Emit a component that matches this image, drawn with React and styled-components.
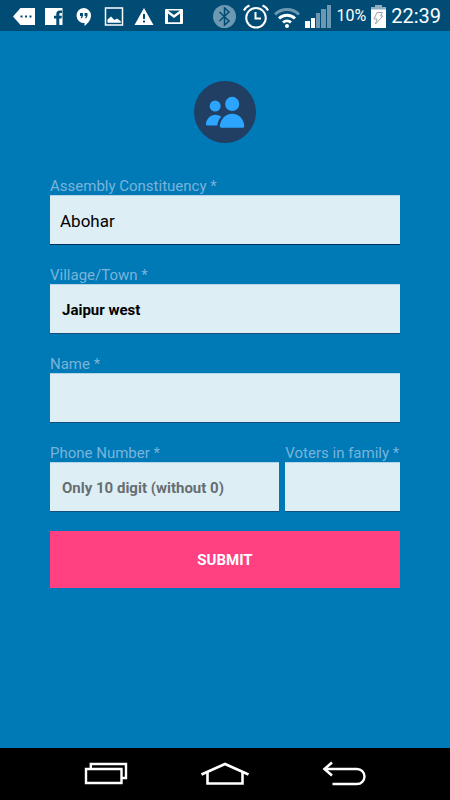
import React, {useState} from 'react';
import styled, {createGlobalStyle} from "styled-components";

const GlobalStyle = createGlobalStyle`
* {
    box-sizing: border-box;
}
body {
    margin: 0;
    background: #0079b7;
    font-family: Roboto, "Liberation Sans", sans-serif;
}
`
const Screen = styled.div`
display: flex;
flex-direction: column;
min-height: 100vh;
`
const StatusBar = styled.header`
display: flex;
justify-content: space-between;
align-items: center;
height: 31px;
padding: 0 9px 0 13px;
background: #004c75;
color: #fff;
`
const StatusGroup = styled.div`
display: flex;
align-items: center;
gap: ${props => props.$gap};
`
const StatusIcon = styled.svg`
display: block;
flex: none;
`
const Percent = styled.span`
font-size: 16px;
line-height: 32px;
`
const Clock = styled.time`
font-size: 20px;
line-height: 32px;
`
const Main = styled.main`
display: flex;
flex: 1;
flex-direction: column;
align-items: center;
padding: 50px 50px 0;
`
const Logo = styled.svg`
display: block;
margin-bottom: 34px;
`
const Form = styled.form`
display: flex;
flex-direction: column;
gap: 19px;
width: 100%;
`
const Fields = styled.div`
display: flex;
flex-direction: column;
gap: 21px;
`
const Row = styled.div`
display: flex;
gap: 6px;
`
const Field = styled.div`
display: flex;
flex-direction: column;
flex: ${props => props.$flex || 'none'};
min-width: 0;
`
const Label = styled.label`
color: #78b4da;
font-size: 15px;
line-height: 18px;
white-space: nowrap;
`
const Input = styled.input`
width: 100%;
height: 50px;
padding: 2px 12px 0;
border: 0;
border-top: 1px solid #b4d5e9;
border-bottom: 1px solid #13507f;
border-radius: 0;
outline: none;
background: #deeef5;
color: #000;
font-family: inherit;
font-size: 15px;
font-weight: 700;

&::placeholder {
    color: #666e72;
    opacity: 1;
}
`
const Select = styled(Input)`
appearance: none;
padding: 2px 10px 0;
border-bottom-color: #04305e;
font-size: 17px;
font-weight: 400;
`
const Submit = styled.button`
height: 57px;
border: 0;
background: #ff4081;
color: #fff;
font-family: inherit;
font-size: 15px;
font-weight: 700;
`
const NavBar = styled.nav`
display: flex;
justify-content: space-between;
align-items: center;
height: 52px;
padding: 0 82px;
background: #000;
`
const NavButton = styled.button`
display: flex;
padding: 0;
border: 0;
background: none;
color: #fff;
`

function Notifications() {
    return (
        <StatusGroup $gap="8px">
            <StatusIcon width="22" height="24" viewBox="0 0 22 24" fill="#fff">
                <path d="M0 12.500 7.500 4H22v17H7.500z"/>
                <path d="M7.500 11.500h2v2h-2zM12 11.500h2v2h-2zM16.500 11.500h2v2h-2z" fill="#004c75"/>
            </StatusIcon>
            <StatusIcon width="22" height="24" viewBox="0 0 22 24" fill="#fff">
                <path d="M2 4h17.500v17h-3.200v-6.500h2.200l.4-2.700h-2.600V10.300q0-1.300 1.400-1.300h1.300V6.500h-2.200q-3.500 0-3.500 3.500v1.800H11v2.700h2.300V21H2z"/>
            </StatusIcon>
            <StatusIcon width="22" height="24" viewBox="0 0 22 24" fill="#fff">
                <path d="M10.500 4a7.500 7.500 0 0 1 7.500 7.500c0 5-4 8.500-6.500 10.500v-3A7.500 7.500 0 1 1 10.500 4z"/>
                <path d="M7 9h3v3l-1.200 2.300H7.600l.8-2.300H7zM11.500 9h3v3l-1.200 2.300h-1.200l.8-2.300h-1.400z" fill="#004c75"/>
            </StatusIcon>
            <StatusIcon width="22" height="24" viewBox="0 0 22 24" fill="#fff">
                <path d="M2.500 4h17v17h-17z" fill="none" stroke="#fff" strokeWidth="1.500"/>
                <path d="M4.500 18.800v-3.300l3.500-3 3.500 3.500 2.500-1.500 3.800 2.800v1.500z"/>
            </StatusIcon>
            <StatusIcon width="22" height="24" viewBox="0 0 22 24" fill="#fff">
                <path d="M11 4 20.500 21h-19z"/>
                <path d="M10 10h2v5h-2zM10 16.500h2v2h-2z" fill="#004c75"/>
            </StatusIcon>
            <StatusIcon width="22" height="24" viewBox="0 0 22 24" fill="#fff">
                <path d="M3 5h16q1 0 1 1v13q0 1-1 1H3q-1 0-1-1V6q0-1 1-1z"/>
                <path d="M5 18.300V9.500l6 4.500 6-4.500v8.800z" fill="#004c75"/>
                <path d="M5 6.500h12L11 11z" fill="#004c75"/>
            </StatusIcon>
        </StatusGroup>
    )
}

function SystemStatus() {
    return (
        <StatusGroup $gap="5px">
            <StatusIcon width="26" height="26" viewBox="0 0 26 26">
                <circle cx="12.500" cy="13.500" r="11.500" fill="#6d98b1"/>
                <path d="M7.500 9 17 18l-4.500 4V5l4.500 4-9.500 9" fill="none" stroke="#004c75" strokeWidth="1.500"/>
            </StatusIcon>
            <StatusIcon width="26" height="26" viewBox="0 0 26 26" fill="none" stroke="#fff" strokeWidth="2">
                <circle cx="13" cy="14.800" r="9.800"/>
                <path d="M12.500 9v6.500H18"/>
                <path d="M1 7.500q1.500-3.500 5.500-5M25 7.500q-1.500-3.500-5.500-5"/>
            </StatusIcon>
            <StatusIcon width="26" height="26" viewBox="0 0 26 26" fill="none" strokeWidth="3">
                <path d="M1 11.500a17 17 0 0 1 24 0" stroke="#6d98b1"/>
                <path d="M5 15.500a11.500 11.500 0 0 1 16 0M9 19.500a6 6 0 0 1 8 0" stroke="#fff"/>
                <circle cx="13" cy="23" r="2" fill="#fff"/>
            </StatusIcon>
            <StatusIcon width="26" height="26" viewBox="0 0 26 26" fill="#6d98b1">
                <path d="M0 18h5v7H0zM6 15h4v10H6z" fill="#fff"/>
                <path d="M11 10h4v15h-4zM16 6h5v19h-5zM22 2h4v23h-4z"/>
            </StatusIcon>
            <Percent>10%</Percent>
            <StatusIcon width="15" height="26" viewBox="0 0 15 26">
                <path d="M0 4h4V2h7v2h4v3H0z" fill="#8fafc1"/>
                <path d="M0 6.500h15V25H0z" fill="#fff"/>
                <path d="M6 9.500h5.500L9.500 13H12l-7.500 8 1.500-5H3z" fill="#fff" stroke="#9aa7ae"/>
            </StatusIcon>
            <Clock>22:39</Clock>
        </StatusGroup>
    )
}

function App() {
    const [constituency, setConstituency] = useState('Abohar')
    const [village, setVillage] = useState('Jaipur west')
    const [name, setName] = useState('')
    const [phone, setPhone] = useState('')
    const [voters, setVoters] = useState('')

    const handleSubmit = (ev) => {
        ev.preventDefault()
    }

    return (
        <Screen>
            <GlobalStyle/>
            <StatusBar>
                <Notifications/>
                <SystemStatus/>
            </StatusBar>

            <Main>
                <Logo width="62" height="62" viewBox="0 0 63 63">
                    <circle cx="31.500" cy="31.500" r="31.500" fill="#213f63"/>
                    <g fill="#2ba5ff">
                        <circle cx="21.500" cy="25.500" r="5.600"/>
                        <circle cx="38.800" cy="23.300" r="7.200"/>
                        <path d="M13.500 45.200q-1.700 0-1.500-1.500c1-5.800 4.700-9.500 9.700-9.500 2.300 0 4.500.7 6 2.200-2.200 2-3.600 5.300-4 8.800z"/>
                        <path d="M27.800 47.500q-1.800 0-1.500-1.800c.5-7 5.700-12.500 12.500-12.500s12 5.500 12.300 12.500q.2 1.800-1.500 1.800z"/>
                    </g>
                </Logo>

                <Form onSubmit={handleSubmit}>
                    <Fields>
                        <Field>
                            <Label htmlFor="constituency">Assembly Constituency *</Label>
                            <Select as="select" id="constituency" value={constituency} onChange={ev => setConstituency(ev.target.value)}>
                                <option value="Abohar">Abohar</option>
                            </Select>
                        </Field>
                        <Field>
                            <Label htmlFor="village">Village/Town *</Label>
                            <Input id="village" value={village} onChange={ev => setVillage(ev.target.value)}/>
                        </Field>
                        <Field>
                            <Label htmlFor="name">Name *</Label>
                            <Input id="name" value={name} onChange={ev => setName(ev.target.value)}/>
                        </Field>
                        <Row>
                            <Field $flex="2 1 0">
                                <Label htmlFor="phone">Phone Number *</Label>
                                <Input id="phone" type="tel" placeholder="Only 10 digit (without 0)" value={phone} onChange={ev => setPhone(ev.target.value)}/>
                            </Field>
                            <Field $flex="1 1 0">
                                <Label htmlFor="voters">Voters in family *</Label>
                                <Input id="voters" inputMode="numeric" value={voters} onChange={ev => setVoters(ev.target.value)}/>
                            </Field>
                        </Row>
                    </Fields>
                    <Submit type="submit">SUBMIT</Submit>
                </Form>
            </Main>

            <NavBar>
                <NavButton aria-label="Recent apps">
                    <svg width="48" height="30" viewBox="0 0 48 30" fill="none" stroke="currentColor" strokeWidth="2.400">
                        <path d="M4 10h35.500v14H4z"/>
                        <path d="M8.800 9.500V5H44v14h-4.500"/>
                    </svg>
                </NavButton>
                <NavButton aria-label="Home">
                    <svg width="50" height="30" viewBox="0 0 50 30" fill="none" stroke="currentColor" strokeWidth="2.600">
                        <path d="M1.500 15.500 25 5l23.500 10.500"/>
                        <path d="M7.500 13.500v11h35v-11"/>
                    </svg>
                </NavButton>
                <NavButton aria-label="Back">
                    <svg width="48" height="30" viewBox="0 0 48 30" fill="none" stroke="currentColor" strokeWidth="2.400">
                        <path d="M12.500 25H37a7.500 7.500 0 0 0 0-15H5"/>
                        <path d="M12 3.500 4.500 10l7.500 6.500" strokeWidth="2.600"/>
                    </svg>
                </NavButton>
            </NavBar>
        </Screen>
    );
}

export default App;
